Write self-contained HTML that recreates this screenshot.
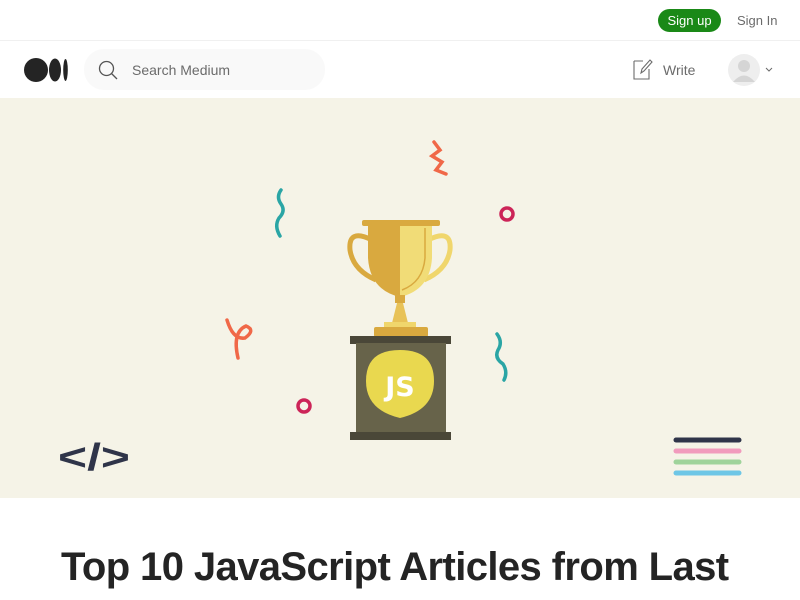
<!DOCTYPE html>
<html><head><meta charset="utf-8"><style>
*{margin:0;padding:0;box-sizing:border-box}
body{width:800px;height:600px;overflow:hidden;background:#fff;font-family:"Liberation Sans",sans-serif;color:#242424;position:relative}
.top{position:absolute;top:0;left:0;width:800px;height:41px;border-bottom:1px solid #f0f0f0}
.su{position:absolute;left:658px;top:9px;width:63px;height:23px;border-radius:12px;background:#1a8917;color:#fff;font-size:13px;line-height:23px;text-align:center}
.si{position:absolute;left:737px;top:13px;font-size:13px;color:#6b6b6b}
.nav{position:absolute;top:41px;left:0;width:800px;height:57px}
.search{position:absolute;left:84px;top:8px;width:241px;height:41px;border-radius:20px;background:#f9f9f9}
.search span{position:absolute;left:48px;top:13px;font-size:14px;color:#6b6b6b}
.write{position:absolute;left:663px;top:21px;font-size:14px;color:#6b6b6b}
.hero{position:absolute;top:98px;left:0;width:800px;height:400px;background:#f5f3e7}
h1{position:absolute;left:61px;top:545px;font-size:40px;font-weight:bold;letter-spacing:-0.6px;white-space:nowrap}
</style></head><body>
<div class="top"><div class="su">Sign up</div><div class="si">Sign In</div></div>
<div class="nav">
<svg style="position:absolute;left:24px;top:17px" width="46" height="24"><ellipse cx="12" cy="12" rx="12" ry="12" fill="#242424"/><ellipse cx="31" cy="12" rx="6" ry="11.5" fill="#242424"/><ellipse cx="41.5" cy="12" rx="2.3" ry="11" fill="#242424"/></svg>
<div class="search"><svg style="position:absolute;left:14px;top:11px" width="20" height="20"><circle cx="8.5" cy="8.5" r="7" fill="none" stroke="#555" stroke-width="1.3"/><line x1="13.5" y1="13.5" x2="19" y2="19" stroke="#555" stroke-width="1.3"/></svg><span>Search Medium</span></div>
<svg style="position:absolute;left:633px;top:17px" width="20" height="22"><path d="M1 3 H10 M1 3 V21 H16 V11" fill="none" stroke="#6b6b6b" stroke-width="1.1"/><path d="M8 15 L9 11 L17 2 L19 4 L11 13 Z" fill="none" stroke="#6b6b6b" stroke-width="1.1"/></svg>
<div class="write">Write</div>
<svg style="position:absolute;left:728px;top:12px" width="50" height="34"><circle cx="16" cy="17" r="16" fill="#eee"/><circle cx="16" cy="13" r="6" fill="#d5d5d5"/><path d="M5 29 Q16 16 27 29 Z" fill="#d5d5d5"/><path d="M38 15 L41 18 L44 15" fill="none" stroke="#6b6b6b"/></svg>
</div>
<div class="hero">
<svg width="800" height="400" viewBox="0 98 800 400">
<path d="M434 142 L440 150 L432 156 L442 162 L436 170 L446 174" fill="none" stroke="#f06848" stroke-width="3.5" stroke-linecap="round"/>
<path d="M281 190 Q276 197 281 204 Q286 211 279 218 Q274 226 280 236" fill="none" stroke="#2aa5a5" stroke-width="3.5" stroke-linecap="round"/>
<path d="M497 334 Q503 342 498 350 Q494 358 503 364 Q508 372 504 380" fill="none" stroke="#2aa5a5" stroke-width="3.5" stroke-linecap="round"/>
<circle cx="507" cy="214" r="6" fill="none" stroke="#cc2458" stroke-width="3.5"/>
<circle cx="304" cy="406" r="6" fill="none" stroke="#cc2458" stroke-width="3.5"/>
<path d="M227 320 Q233 340 245 338 Q256 330 246 326 Q232 332 238 358" fill="none" stroke="#f06848" stroke-width="3.5" stroke-linecap="round"/>
<text x="58" y="470" font-family="Liberation Sans" font-weight="bold" font-size="38" fill="#2f3449" textLength="72" lengthAdjust="spacingAndGlyphs">&lt;/&gt;</text>
<g stroke-width="5" stroke-linecap="round"><line x1="676" y1="440" x2="739" y2="440" stroke="#2f3449"/><line x1="676" y1="451" x2="739" y2="451" stroke="#f19bbd"/><line x1="676" y1="462" x2="739" y2="462" stroke="#9fd39b"/><line x1="676" y1="473" x2="739" y2="473" stroke="#6ec6e6"/></g>
<path d="M372 240 Q348 228 350 250 Q353 270 376 280" fill="none" stroke="#d9a93f" stroke-width="5"/>
<path d="M428 240 Q452 228 450 250 Q447 270 424 280" fill="none" stroke="#f0d66c" stroke-width="5"/>
<path d="M368 226 H400 V297 Q370 290 368 258 Z" fill="#d9a93f"/>
<path d="M400 226 H432 V258 Q430 290 400 297 Z" fill="#f1dc77"/>
<path d="M425 228 V258 Q423 282 402 290" fill="none" stroke="#d9a93f" stroke-width="1.5"/>
<rect x="362" y="220" width="78" height="6" rx="2" fill="#d9a93f"/>
<rect x="395" y="295" width="10" height="8" fill="#d9a93f"/>
<path d="M397 303 H403 L408 323 H392 Z" fill="#e8c258"/>
<rect x="384" y="322" width="32" height="5" fill="#f0d66c"/>
<rect x="374" y="327" width="54" height="10" rx="2" fill="#d9a93f"/>
<rect x="350" y="336" width="101" height="8" fill="#4a4738"/>
<rect x="356" y="343" width="90" height="89" fill="#67634a"/>
<rect x="350" y="432" width="101" height="8" fill="#4a4738"/>
<path d="M400 418 Q366 410 366 381 Q366 350 400 350 Q434 350 434 381 Q434 410 400 418 Z" fill="#e9d84f"/>
<text x="400" y="396" text-anchor="middle" font-family="DejaVu Sans" font-weight="bold" font-size="27" fill="#fff">JS</text>
</svg>
</div>
<h1>Top 10 JavaScript Articles from Last</h1>
</body></html>
